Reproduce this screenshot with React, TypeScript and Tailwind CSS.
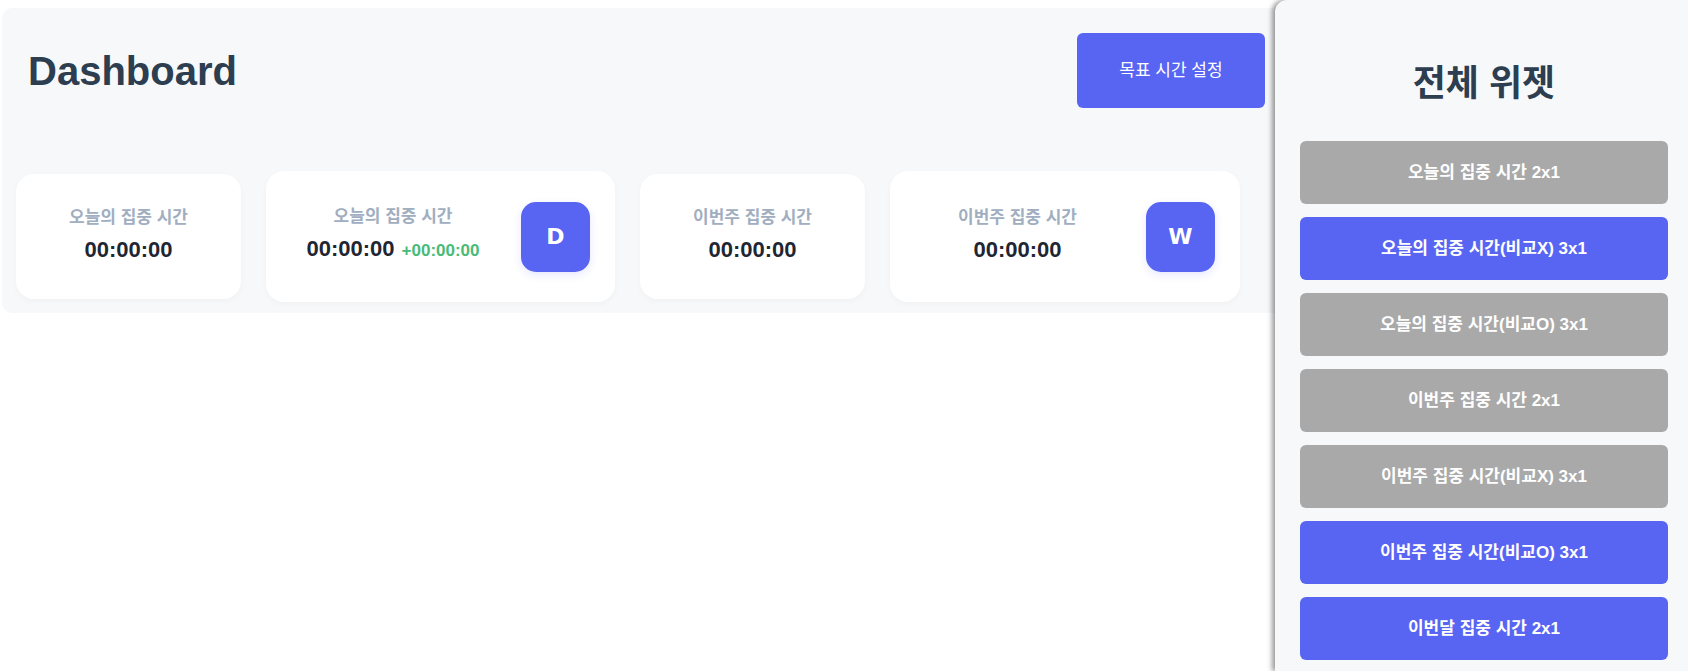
import React from "react";

const font = "font-['Liberation_Sans','Noto_Sans_CJK_KR',sans-serif]";

const widgets = [
  { id: 1, label: "오늘의 집중 시간 2x1", active: false },
  { id: 2, label: "오늘의 집중 시간(비교X) 3x1", active: true },
  { id: 3, label: "오늘의 집중 시간(비교O) 3x1", active: false },
  { id: 4, label: "이번주 집중 시간 2x1", active: false },
  { id: 5, label: "이번주 집중 시간(비교X) 3x1", active: false },
  { id: 6, label: "이번주 집중 시간(비교O) 3x1", active: true },
  { id: 7, label: "이번달 집중 시간 2x1", active: true },
];

const TimeText = ({ label, diff }: { label: string; diff?: string }) => (
  <div className="flex flex-col items-center">
    <span className="text-[17px] leading-[24px] font-bold text-[#a0aec0]">{label}</span>
    <div className="mt-[3px] flex items-baseline gap-[7px] leading-[34px]">
      <span className="text-[22px] font-bold text-[#1f2633]">00:00:00</span>
      {diff && <span className="text-[17px] font-bold text-[#48bb78]">{diff}</span>}
    </div>
  </div>
);

const Badge = ({ letter }: { letter: string }) => (
  <div className="flex h-[70px] w-[69px] shrink-0 items-center justify-center rounded-[15px] bg-[#5865f2] shadow-[0_3px_8px_rgba(88,101,242,0.15)]">
    <span className="font-['DejaVu_Sans',sans-serif] text-[22px] font-bold text-white">{letter}</span>
  </div>
);

export default function App() {
  return (
    <div className={`relative h-[671px] w-full overflow-hidden bg-white ${font}`}>
      {/* ── Main panel ── */}
      <main className="pl-[2px] pt-[8px]">
        <section className="w-[1300px] rounded-[10px] bg-[#f7f8fa] pb-[11px] pt-[25px]">
          <div className="flex items-center justify-between pl-[26px] pr-[37px]">
            <h1 className="text-[40px] font-bold leading-none text-[#2c3e50]">Dashboard</h1>
            <button className="h-[75px] w-[188px] rounded-[6px] bg-[#5865f2] text-[17px] text-white">
              목표 시간 설정
            </button>
          </div>

          <div className="mt-[63px] flex items-center gap-[25px] pl-[14px]">
            <div className="flex h-[125px] w-[225px] items-center justify-center rounded-[18px] bg-white shadow-[0_2px_6px_rgba(0,0,0,0.03)]">
              <TimeText label="오늘의 집중 시간" />
            </div>
            <div className="flex h-[131px] w-[349px] items-center gap-[26px] rounded-[18px] bg-white px-[25px] shadow-[0_2px_6px_rgba(0,0,0,0.03)]">
              <div className="flex flex-1 justify-center">
                <TimeText label="오늘의 집중 시간" diff="+00:00:00" />
              </div>
              <Badge letter="D" />
            </div>
            <div className="flex h-[125px] w-[225px] items-center justify-center rounded-[18px] bg-white shadow-[0_2px_6px_rgba(0,0,0,0.03)]">
              <TimeText label="이번주 집중 시간" />
            </div>
            <div className="flex h-[131px] w-[350px] items-center gap-[26px] rounded-[18px] bg-white px-[25px] shadow-[0_2px_6px_rgba(0,0,0,0.03)]">
              <div className="flex flex-1 justify-center">
                <TimeText label="이번주 집중 시간" />
              </div>
              <Badge letter="W" />
            </div>
          </div>
        </section>
      </main>

      {/* ── Widget drawer ── */}
      <aside className="absolute right-0 top-0 h-full w-[413px] rounded-tl-[12px] bg-[#f7f8fa] pl-[25px] pr-[20px] pt-[62px] shadow-[-3px_0_5px_rgba(0,0,0,0.4)]">
        <h2 className="text-center text-[36px] font-bold leading-[44px] text-[#2c3e50]">전체 위젯</h2>
        <div className="mt-[35px] flex flex-col gap-[13px]">
          {widgets.map((w) => (
            <button
              key={w.id}
              className={`h-[63px] w-full rounded-[6px] text-[17px] font-bold text-white ${
                w.active ? "bg-[#5865f2]" : "bg-[#a9a9a9]"
              }`}
            >
              {w.label}
            </button>
          ))}
        </div>
      </aside>
    </div>
  );
}
